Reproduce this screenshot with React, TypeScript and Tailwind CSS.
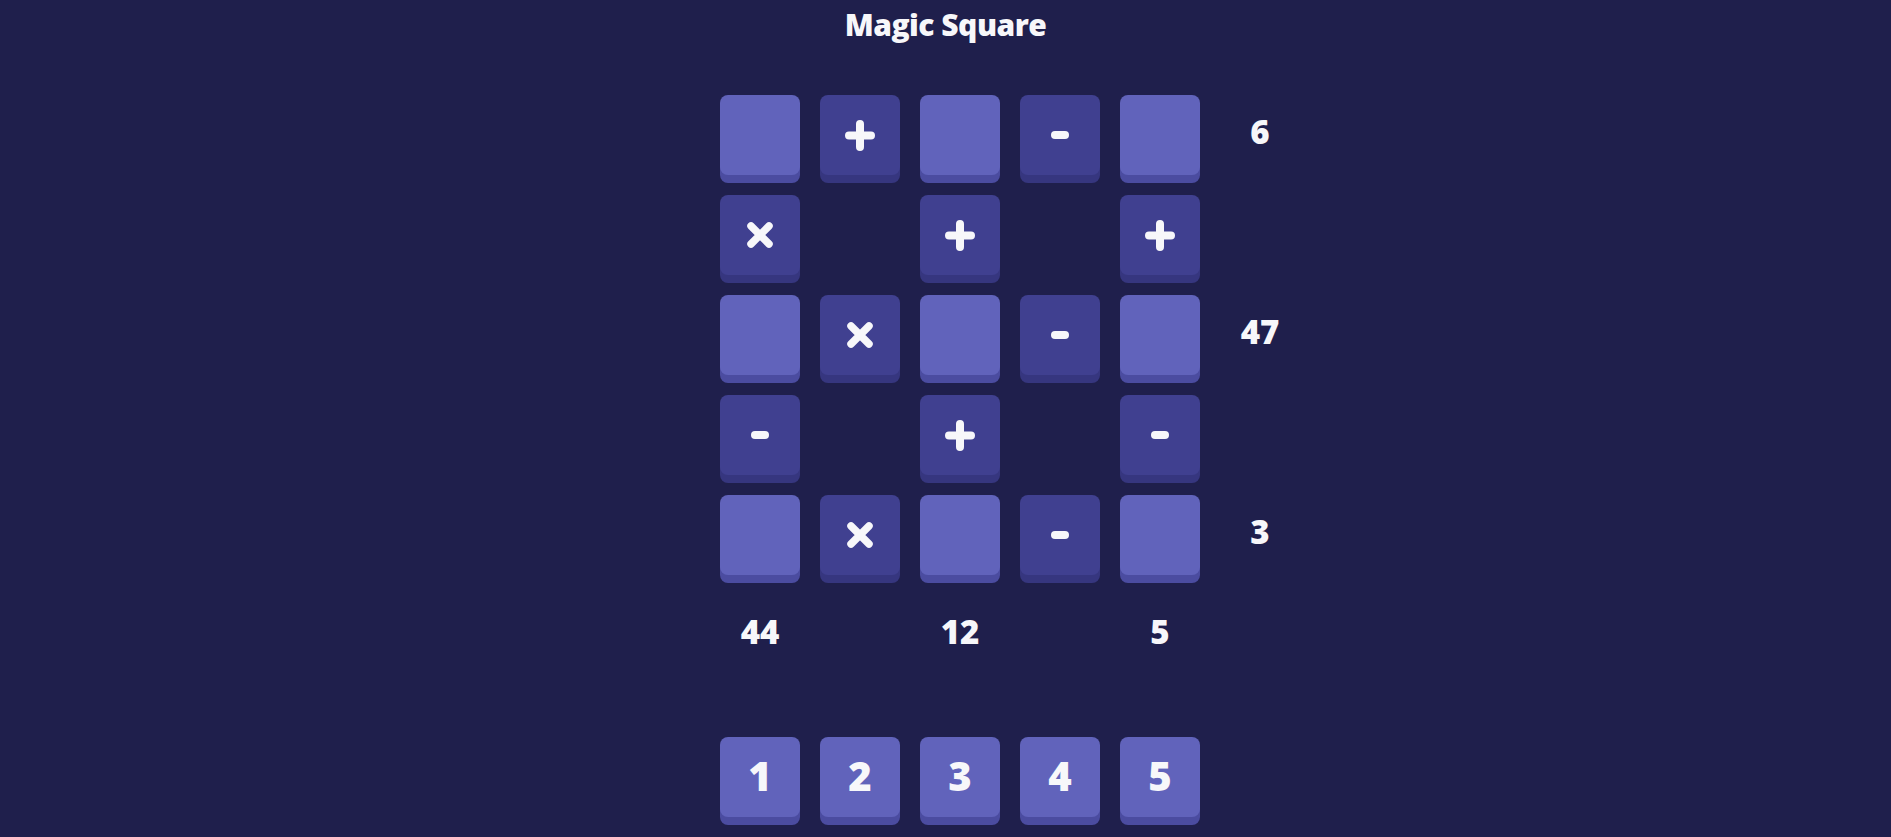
import React from 'react';

type Cell = { kind: 'slot' } | { kind: 'op'; sign: string } | { kind: 'empty' } | { kind: 'total'; value: number };

const rows: Cell[][] = [
  [{ kind: 'slot' }, { kind: 'op', sign: '+' }, { kind: 'slot' }, { kind: 'op', sign: '-' }, { kind: 'slot' }, { kind: 'total', value: 6 }],
  [{ kind: 'op', sign: '×' }, { kind: 'empty' }, { kind: 'op', sign: '+' }, { kind: 'empty' }, { kind: 'op', sign: '+' }, { kind: 'empty' }],
  [{ kind: 'slot' }, { kind: 'op', sign: '×' }, { kind: 'slot' }, { kind: 'op', sign: '-' }, { kind: 'slot' }, { kind: 'total', value: 47 }],
  [{ kind: 'op', sign: '-' }, { kind: 'empty' }, { kind: 'op', sign: '+' }, { kind: 'empty' }, { kind: 'op', sign: '-' }, { kind: 'empty' }],
  [{ kind: 'slot' }, { kind: 'op', sign: '×' }, { kind: 'slot' }, { kind: 'op', sign: '-' }, { kind: 'slot' }, { kind: 'total', value: 3 }],
  [{ kind: 'total', value: 44 }, { kind: 'empty' }, { kind: 'total', value: 12 }, { kind: 'empty' }, { kind: 'total', value: 5 }, { kind: 'empty' }],
];

const font = { fontFamily: '"Open Sans", Lato, sans-serif' };

function Sign({ sign }: { sign: string }) {
  if (sign === '-') return <span className="block w-[18px] h-[8px] rounded-full bg-[#f7f7fa]" />;
  if (sign === '+')
    return (
      <svg width="30" height="31" viewBox="0 0 30 31">
        <path d="M15 4 V27 M4 15.5 H26" stroke="#f7f7fa" strokeWidth="8" strokeLinecap="round" />
      </svg>
    );
  return (
    <svg width="28" height="28" viewBox="0 0 28 28">
      <path d="M5 5 L23 23 M23 5 L5 23" stroke="#f7f7fa" strokeWidth="7.5" strokeLinecap="round" />
    </svg>
  );
}

export default function App() {
  return (
    <div className="min-h-screen w-full bg-[#1f1f4c] text-[#f7f7fa]" style={font}>
      <h1 className="pt-[4px] text-center text-[30px] leading-[42px] font-extrabold tracking-[-0.5px]">Magic Square</h1>

      <div className="flex justify-center mt-[49px]">
        <div className="ml-[129px] flex flex-col">
          <div className="grid grid-cols-[repeat(6,80px)] auto-rows-[80px] gap-5">
            {rows.map((row, r) =>
              row.map((cell, c) => {
                const key = `${r}-${c}`;
                if (cell.kind === 'slot')
                  return <div key={key} className="rounded-lg bg-[#6163bb] shadow-[0_8px_0_#4b4ca0]" />;
                if (cell.kind === 'op')
                  return (
                    <div key={key} className="rounded-lg bg-[#404090] shadow-[0_8px_0_#36367f] flex items-center justify-center">
                      <Sign sign={cell.sign} />
                    </div>
                  );
                if (cell.kind === 'total')
                  return (
                    <div key={key} className="flex items-center justify-center pb-[6px] text-[33px] font-extrabold">
                      {cell.value}
                    </div>
                  );
                return <div key={key} />;
              })
            )}
          </div>

          <div className="mt-[62px] flex gap-5">
            {[1, 2, 3, 4, 5].map((n) => (
              <button
                key={n}
                className="w-20 h-20 rounded-lg bg-[#6163bb] shadow-[0_8px_0_#4b4ca0] flex items-center justify-center pb-[2px] text-[40px] font-extrabold text-[#f7f7fa]"
              >
                {n}
              </button>
            ))}
          </div>
        </div>
      </div>
    </div>
  );
}
